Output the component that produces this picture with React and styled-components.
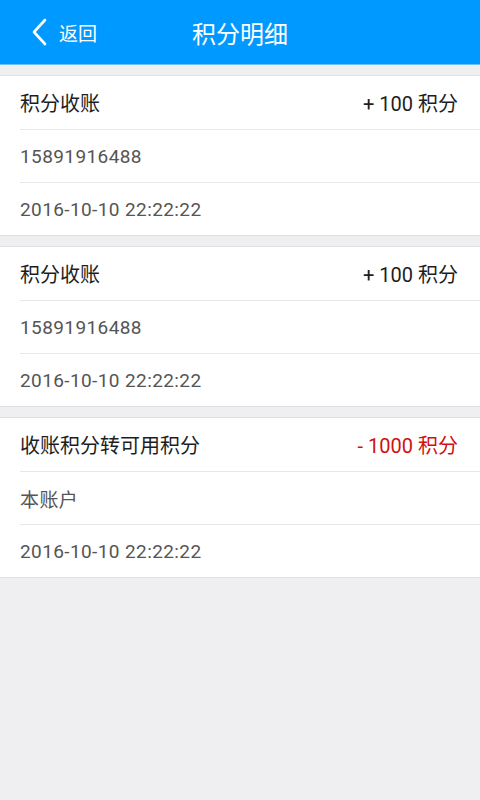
import React from "react";
import styled, { createGlobalStyle } from "styled-components";

const Global = createGlobalStyle`
  html, body {
    margin: 0;
    padding: 0;
    background: #efeff1;
    font-family: "Roboto", "Noto Sans CJK SC", sans-serif;
  }
`;

const Page = styled.div`
  min-height: 800px;
  background: #efeff1;
`;

const Header = styled.div`
  position: relative;
  height: 65px;
  background: #0099ff;
  display: flex;
  align-items: center;
  justify-content: center;
  color: #fff;
  border-bottom: 1px solid #6ec1ff;
  box-sizing: border-box;
`;

const Back = styled.div`
  position: absolute;
  left: 32px;
  top: 0;
  height: 100%;
  display: flex;
  align-items: center;
  gap: 11px;
  font-size: 19px;
`;

const Title = styled.h1`
  margin: 0;
  font-size: 24px;
  font-weight: 400;
`;

const List = styled.div`
  display: flex;
  flex-direction: column;
  gap: 10px;
  padding-top: 10px;
`;

const Card = styled.div`
  background: #fff;
  border-top: 1px solid #dfdfe1;
  border-bottom: 1px solid #dfdfe1;
  padding-left: 20px;
`;

const Row = styled.div`
  height: ${(p) => (p.$head ? "53px" : "52px")};
  display: flex;
  align-items: center;
  justify-content: space-between;
  padding-right: 22px;
  border-bottom: ${(p) => (p.$last ? "none" : "1px solid #e8e8ea")};
  font-size: ${(p) => (p.$head ? "20px" : "19px")};
  letter-spacing: ${(p) => (p.$head ? "0" : "0.4px")};
  color: ${(p) => (p.$head ? "#1e1e1e" : "#555")};
`;

const Amount = styled.span`
  color: ${(p) => (p.$neg ? "#d01010" : "#1e1e1e")};
  font-size: 20px;
`;

const records = [
  { title: "积分收账", amount: "+ 100 积分", who: "15891916488", time: "2016-10-10 22:22:22" },
  { title: "积分收账", amount: "+ 100 积分", who: "15891916488", time: "2016-10-10 22:22:22" },
  { title: "收账积分转可用积分", amount: "- 1000 积分", neg: true, who: "本账户", time: "2016-10-10 22:22:22" },
];

export default function App() {
  return (
    <>
      <Global />
      <Page>
        <Header>
          <Back>
            <svg width="16" height="28" viewBox="0 0 16 28">
              <path d="M13 2 L2 14 L13 26" fill="none" stroke="#fff" strokeWidth="2.6" strokeLinecap="round" strokeLinejoin="round" />
            </svg>
            <span>返回</span>
          </Back>
          <Title>积分明细</Title>
        </Header>
        <List>
          {records.map((r, i) => (
            <Card key={i}>
              <Row $head>
                <span>{r.title}</span>
                <Amount $neg={r.neg}>{r.amount}</Amount>
              </Row>
              <Row>{r.who}</Row>
              <Row $last>{r.time}</Row>
            </Card>
          ))}
        </List>
      </Page>
    </>
  );
}
